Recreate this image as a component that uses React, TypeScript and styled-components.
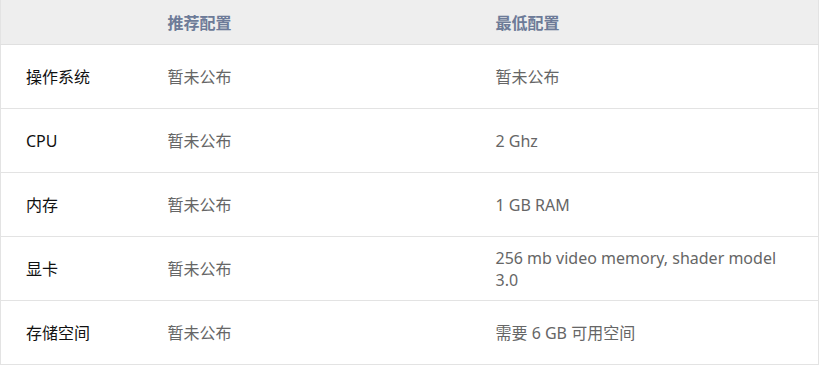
import React from 'react'
import styled, { createGlobalStyle } from 'styled-components'

const GlobalStyle = createGlobalStyle`
    body {
        margin: 0;
        background: #ffffff;
        font-family: "Noto Sans", "Noto Sans CJK SC", sans-serif;
    }
`

const Table = styled.table`
    width: 819px;
    border-collapse: collapse;
    border-left: 1px solid #e3e3e3;
    border-right: 1px solid #e3e3e3;
    table-layout: fixed;
    font-size: 16px;
`

const HeadRow = styled.tr`
    background: #eeeeee;
    height: 44px;
    border-bottom: 1px solid #e0e0e0;
`

const HeadCell = styled.th`
    text-align: left;
    font-weight: bold;
    color: #6d7b98;
    padding: 1px 25px 0;
`

const Row = styled.tr`
    height: 64px;
    border-bottom: 1px solid #e3e3e3;
`

const Cell = styled.td<{ $label?: boolean }>`
    padding: 2px 25px 0;
    line-height: 22px;
    color: ${p => (p.$label ? '#111111' : '#666666')};
    vertical-align: middle;
`

const rows = [
    { name: '操作系统', rec: '暂未公布', min: '暂未公布' },
    { name: 'CPU', rec: '暂未公布', min: '2 Ghz' },
    { name: '内存', rec: '暂未公布', min: '1 GB RAM' },
    { name: '显卡', rec: '暂未公布', min: '256 mb video memory, shader model 3.0' },
    { name: '存储空间', rec: '暂未公布', min: '需要 6 GB 可用空间' },
]

const App = () => {
    return (
        <>
            <GlobalStyle />
            <Table>
                <colgroup>
                    <col style={{ width: 142 }} />
                    <col style={{ width: 328 }} />
                    <col />
                </colgroup>
                <thead>
                    <HeadRow>
                        <HeadCell></HeadCell>
                        <HeadCell>推荐配置</HeadCell>
                        <HeadCell>最低配置</HeadCell>
                    </HeadRow>
                </thead>
                <tbody>
                    {rows.map((r, i) => (
                        <Row key={i}>
                            <Cell $label>{r.name}</Cell>
                            <Cell>{r.rec}</Cell>
                            <Cell>{r.min}</Cell>
                        </Row>
                    ))}
                </tbody>
            </Table>
        </>
    )
}

export default App
